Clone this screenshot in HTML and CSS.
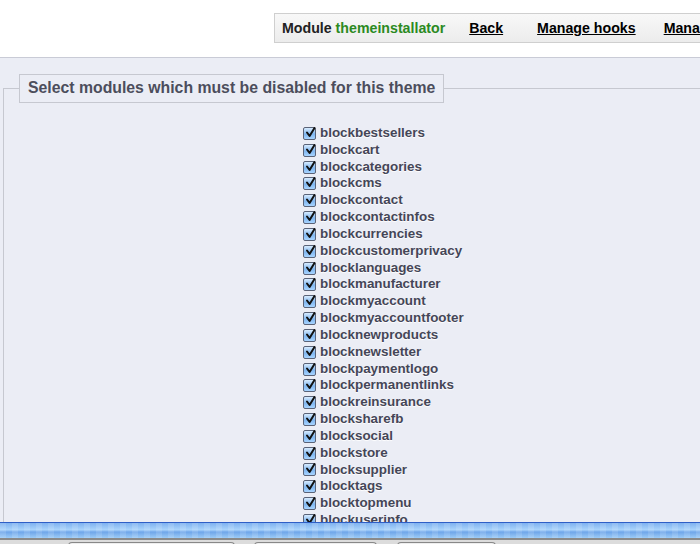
FILE: index.html
```html
<!DOCTYPE html>
<html lang="en">
<head>
    <meta charset="UTF-8">
    <title>Theme installator</title>
    <link rel="stylesheet" href="styles.css">
</head>
<body>
    <!-- Top toolbar -->
    <div class="header">
        <div class="toolbar">
            <span class="mod">Module <span class="modname">themeinstallator</span></span>
            <a href="#" class="tlink">Back</a>
            <a href="#" class="tlink">Manage hooks</a>
            <a href="#" class="tlink">Manage translations</a>
        </div>
    </div>

    <!-- Module selection -->
    <div class="main">
        <fieldset class="box">
            <legend>Select modules which must be disabled for this theme</legend>
            <ul class="modlist">
                <li><span class="cb"><svg viewBox="0 0 13 13"><path d="M3 6.5 L5.6 10 L10.5 2" /></svg></span>blockbestsellers</li>
                <li><span class="cb"><svg viewBox="0 0 13 13"><path d="M3 6.5 L5.6 10 L10.5 2" /></svg></span>blockcart</li>
                <li><span class="cb"><svg viewBox="0 0 13 13"><path d="M3 6.5 L5.6 10 L10.5 2" /></svg></span>blockcategories</li>
                <li><span class="cb"><svg viewBox="0 0 13 13"><path d="M3 6.5 L5.6 10 L10.5 2" /></svg></span>blockcms</li>
                <li><span class="cb"><svg viewBox="0 0 13 13"><path d="M3 6.5 L5.6 10 L10.5 2" /></svg></span>blockcontact</li>
                <li><span class="cb"><svg viewBox="0 0 13 13"><path d="M3 6.5 L5.6 10 L10.5 2" /></svg></span>blockcontactinfos</li>
                <li><span class="cb"><svg viewBox="0 0 13 13"><path d="M3 6.5 L5.6 10 L10.5 2" /></svg></span>blockcurrencies</li>
                <li><span class="cb"><svg viewBox="0 0 13 13"><path d="M3 6.5 L5.6 10 L10.5 2" /></svg></span>blockcustomerprivacy</li>
                <li><span class="cb"><svg viewBox="0 0 13 13"><path d="M3 6.5 L5.6 10 L10.5 2" /></svg></span>blocklanguages</li>
                <li><span class="cb"><svg viewBox="0 0 13 13"><path d="M3 6.5 L5.6 10 L10.5 2" /></svg></span>blockmanufacturer</li>
                <li><span class="cb"><svg viewBox="0 0 13 13"><path d="M3 6.5 L5.6 10 L10.5 2" /></svg></span>blockmyaccount</li>
                <li><span class="cb"><svg viewBox="0 0 13 13"><path d="M3 6.5 L5.6 10 L10.5 2" /></svg></span>blockmyaccountfooter</li>
                <li><span class="cb"><svg viewBox="0 0 13 13"><path d="M3 6.5 L5.6 10 L10.5 2" /></svg></span>blocknewproducts</li>
                <li><span class="cb"><svg viewBox="0 0 13 13"><path d="M3 6.5 L5.6 10 L10.5 2" /></svg></span>blocknewsletter</li>
                <li><span class="cb"><svg viewBox="0 0 13 13"><path d="M3 6.5 L5.6 10 L10.5 2" /></svg></span>blockpaymentlogo</li>
                <li><span class="cb"><svg viewBox="0 0 13 13"><path d="M3 6.5 L5.6 10 L10.5 2" /></svg></span>blockpermanentlinks</li>
                <li><span class="cb"><svg viewBox="0 0 13 13"><path d="M3 6.5 L5.6 10 L10.5 2" /></svg></span>blockreinsurance</li>
                <li><span class="cb"><svg viewBox="0 0 13 13"><path d="M3 6.5 L5.6 10 L10.5 2" /></svg></span>blocksharefb</li>
                <li><span class="cb"><svg viewBox="0 0 13 13"><path d="M3 6.5 L5.6 10 L10.5 2" /></svg></span>blocksocial</li>
                <li><span class="cb"><svg viewBox="0 0 13 13"><path d="M3 6.5 L5.6 10 L10.5 2" /></svg></span>blockstore</li>
                <li><span class="cb"><svg viewBox="0 0 13 13"><path d="M3 6.5 L5.6 10 L10.5 2" /></svg></span>blocksupplier</li>
                <li><span class="cb"><svg viewBox="0 0 13 13"><path d="M3 6.5 L5.6 10 L10.5 2" /></svg></span>blocktags</li>
                <li><span class="cb"><svg viewBox="0 0 13 13"><path d="M3 6.5 L5.6 10 L10.5 2" /></svg></span>blocktopmenu</li>
                <li><span class="cb"><svg viewBox="0 0 13 13"><path d="M3 6.5 L5.6 10 L10.5 2" /></svg></span>blockuserinfo</li>
            </ul>
        </fieldset>
    </div>

    <!-- Bottom bar -->
    <div class="bottombar">
        <div class="stripe"></div>
        <div class="buttons">
            <span class="bbtn b1"></span>
            <span class="bbtn b2"></span>
            <span class="bbtn b3"></span>
        </div>
    </div>
</body>
</html>
```

FILE: styles.css
```css
html, body { margin: 0; padding: 0; }
body { background: #fff; font-family: "Liberation Sans", Arial, sans-serif; height: 544px; overflow: hidden; }

/* top toolbar */
.header { height: 58px; padding-top: 13px; box-sizing: border-box; border-bottom: 1px solid #c9cbd6; overflow: hidden; }
.toolbar {
    margin-left: 274px; height: 28px;
    border: 1px solid #cfcfcf; border-right: none;
    background: linear-gradient(#f8f8f8, #ececec);
    display: flex; align-items: center; white-space: nowrap;
    font-size: 14.2px; font-weight: bold; padding-left: 7px;
}
.mod { color: #222; margin-right: 24px; }
.modname { color: #2b8a1f; }
.tlink { color: #000; margin-right: 34px; }
.tlink:nth-of-type(2) { margin-right: 28px; }

/* main area */
.main { background: #ebedf5; height: 486px; box-sizing: border-box; padding-top: 16px; overflow: hidden; }
.box {
    margin: 0 0 0 3px; padding: 0; width: 800px;
    border: 1px solid #c6c8d0; border-bottom: none;
    height: 480px; box-sizing: border-box;
}
.box legend {
    margin-left: 15px; padding: 4px 8px 5px 8px;
    border: 1px solid #c6c8d0; background: #ebedf5;
    font-size: 15.8px; font-weight: bold; color: #4c4d5c;
}
.modlist { list-style: none; margin: 22px 0 0 0; padding: 0 0 0 299px; }
.modlist li {
    height: 16.83px; line-height: 16.83px;
    font-size: 13.4px; font-weight: bold; color: #454657;
    text-shadow: 0 1px 1px #fff;
    display: flex; align-items: center;
}
.cb {
    width: 11px; height: 11px; margin-right: 4px; flex: none;
    border: 1px solid #5a6378; border-radius: 2px;
    background: linear-gradient(#d8ecff, #7fb6f0 55%, #a8d4ff);
}
.cb svg { display: block; width: 13px; height: 13px; margin: -2px 0 0 0; }
.cb path { fill: none; stroke: #111; stroke-width: 2; stroke-linecap: round; stroke-linejoin: round; }

/* bottom bar lies over the list */
.bottombar { position: fixed; left: 0; bottom: 0; width: 100%; height: 22px; }
.stripe {
    height: 15px; border-top: 1px solid #2f5fc6; border-bottom: 2px solid #8a8a8a;
    background:
        repeating-linear-gradient(90deg, rgba(255,255,255,0.12) 0 6px, rgba(0,0,0,0) 6px 12px),
        linear-gradient(#7fb2f0, #a9d3fb 45%, #6fa6ea 60%, #9ccbf7);
}
.buttons { height: 4px; background: #dcdcdc; display: flex; padding-top: 2px; }
.bbtn { height: 6px; border: 1px solid #888; border-bottom: none; border-radius: 4px 4px 0 0; background: #eee; }
.b1 { margin-left: 68px; width: 165px; }
.b2 { margin-left: 19px; width: 121px; }
.b3 { margin-left: 20px; width: 97px; }
```
